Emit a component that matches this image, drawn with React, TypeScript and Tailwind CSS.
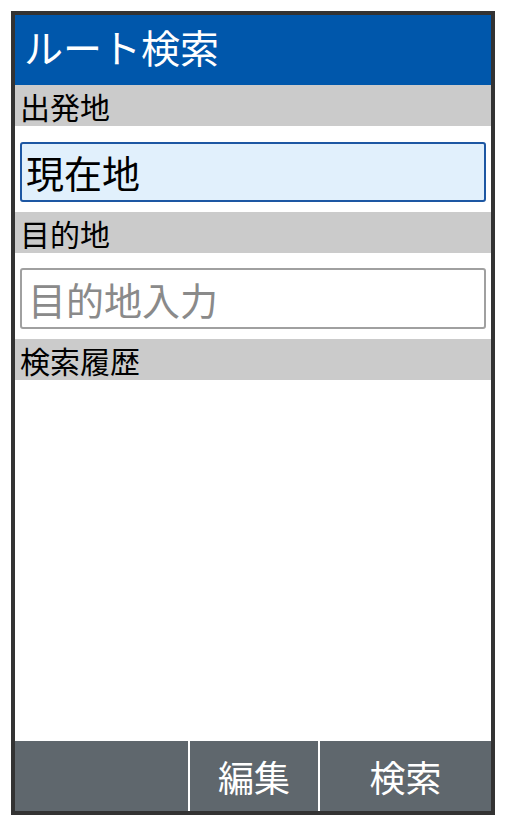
import React from "react";

const font = { fontFamily: '"Noto Sans CJK JP", "Noto Sans", sans-serif' };

export default function App() {
  return (
    <div className="w-[507px] h-[826px] bg-white p-[11px]" style={font}>
      <div className="w-[484px] h-[804px] border-4 border-[#333333] flex flex-col bg-white">
        <div className="h-[70px] bg-[#0057ab] text-white text-[39px] leading-none flex items-center pl-[9px] pb-[7px]">
          ルート検索
        </div>
        <div className="h-[41px] bg-[#cbcbcb] text-black text-[30px] leading-none flex items-center pl-[5px]">
          出発地
        </div>
        <div className="pt-[16px] pb-[10px] px-[5px]">
          <div className="h-[60px] bg-[#e1f0fc] border-2 border-[#1d57a3] rounded-[3px] text-[38px] leading-none text-black flex items-center pl-[4px]">
            現在地
          </div>
        </div>
        <div className="h-[41px] bg-[#cbcbcb] text-black text-[30px] leading-none flex items-center pl-[5px]">
          目的地
        </div>
        <div className="pt-[15px] pb-[10px] px-[5px]">
          <div className="h-[61px] bg-white border-2 border-[#a0a0a0] rounded-[3px] text-[38px] leading-none text-[#8a8a8a] flex items-center pl-[6px]">
            目的地入力
          </div>
        </div>
        <div className="h-[41px] bg-[#cbcbcb] text-black text-[30px] leading-none flex items-center pl-[5px]">
          検索履歴
        </div>
        <div className="flex-1" />
        <div className="h-[70px] bg-[#5f676d] flex text-white text-[36px] leading-none">
          <div className="w-[175px] border-r-2 border-white" />
          <div className="w-[130px] border-r-2 border-white flex items-center justify-center">編集</div>
          <div className="flex-1 flex items-center justify-center">検索</div>
        </div>
      </div>
    </div>
  );
}
